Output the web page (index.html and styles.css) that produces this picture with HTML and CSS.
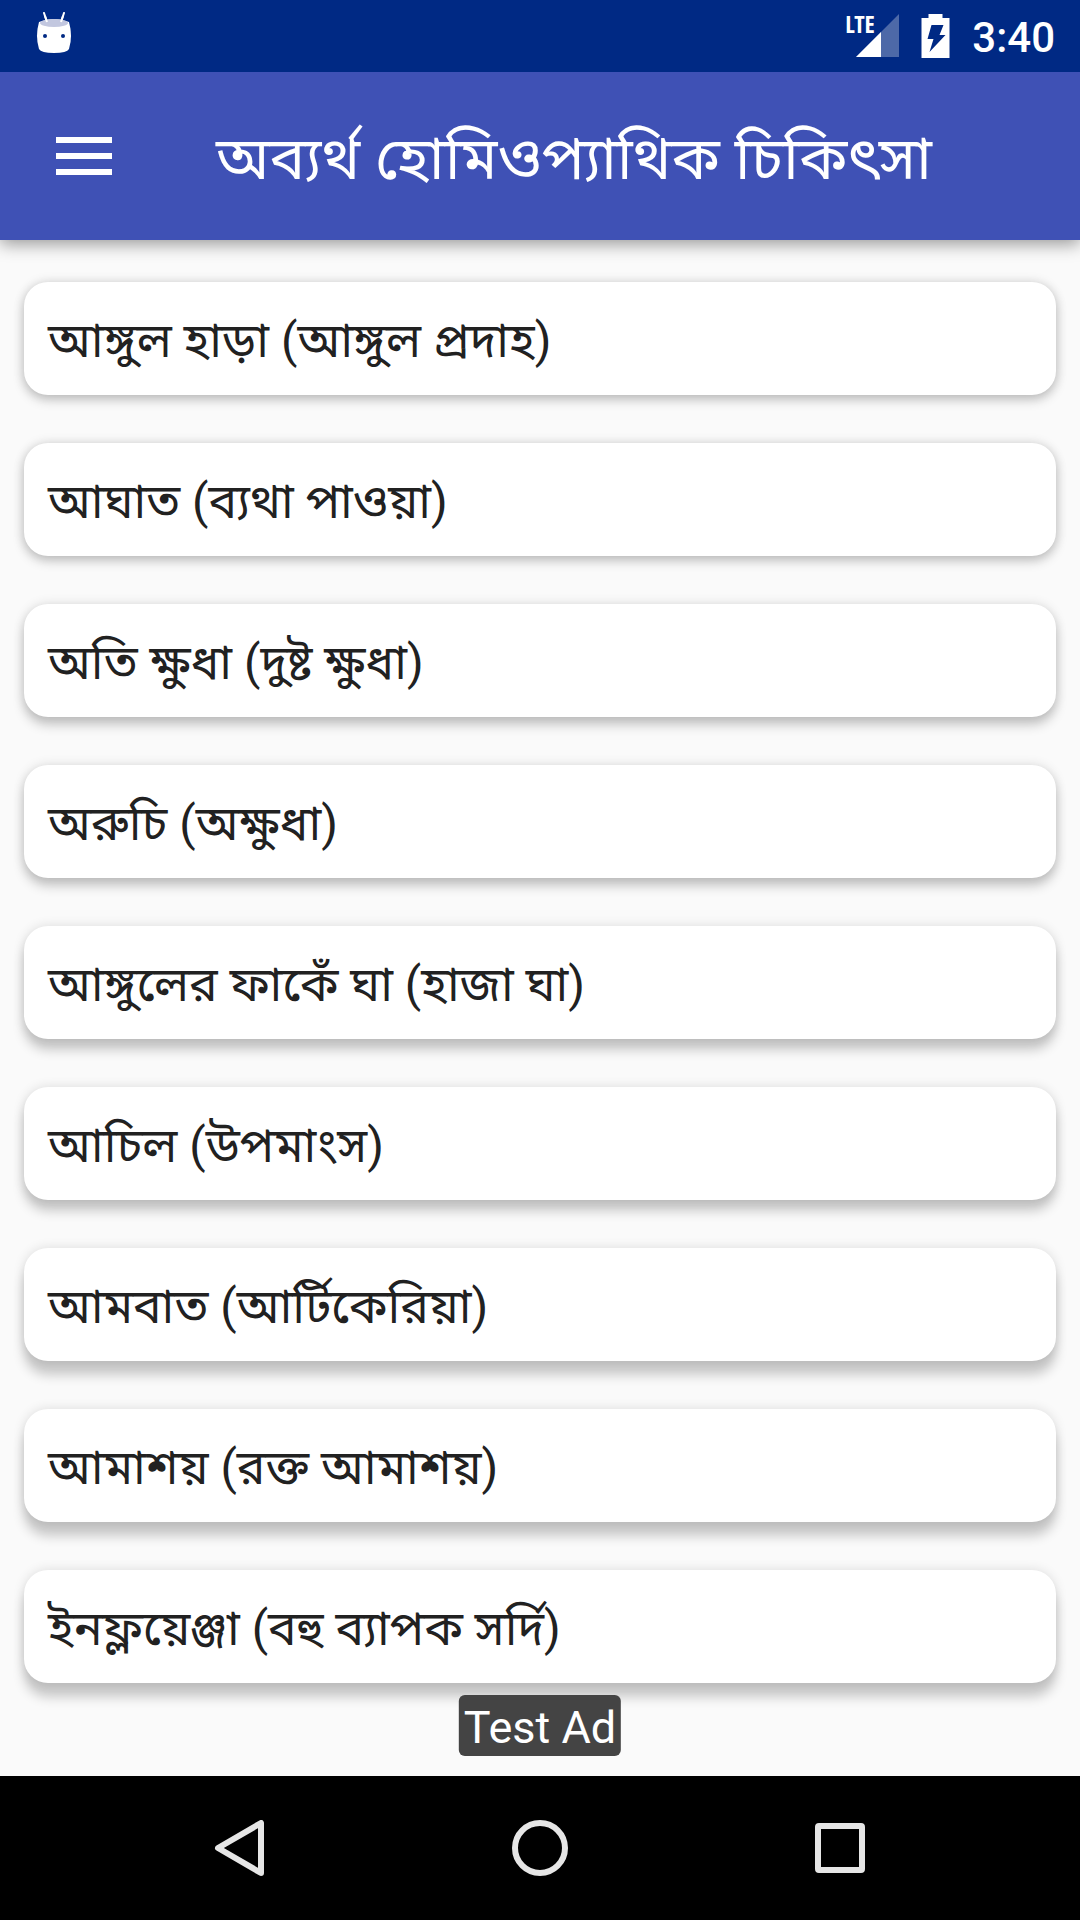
FILE: index.html
```html
<!DOCTYPE html>
<html lang="bn">
<head>
  <meta charset="utf-8">
  <meta name="viewport" content="width=device-width, initial-scale=1">
  <title>অব্যর্থ হোমিওপ্যাথিক চিকিৎসা</title>
  <link rel="stylesheet" href="styles.css">
</head>
<body>
  <div class="status-bar">
    <svg class="status-bot" viewBox="0 0 36 42" aria-hidden="true">
      <path d="M8 1l3 9M28 1l-3 9" stroke="#fff" stroke-width="2" stroke-linecap="round"/>
      <path d="M3 10Q18 4 33 10Q37 24 33 37Q31 41 18 41Q5 41 3 37Q-1 24 3 10z" fill="#fff"/>
      <ellipse cx="18" cy="11" rx="14" ry="4" fill="#c2c7df"/>
      <path d="M9 4l2 6M27 4l-2 6" stroke="#fff" stroke-width="2"/>
      <circle cx="9" cy="24" r="2" fill="#002984"/>
      <circle cx="27" cy="24" r="2" fill="#002984"/>
    </svg>
    <div class="status-right">
      <div class="signal">
        <svg class="signal-icon" viewBox="0 0 54 44" aria-hidden="true">
          <path d="M54 0v43H11z" fill="#4d69a8"/>
          <path d="M36 18v25H11z" fill="#fff"/>
        </svg>
        <span class="signal-label">LTE</span>
      </div>
      <svg class="battery" viewBox="0 0 28 44" aria-hidden="true">
        <path d="M7 0h14v4h7v40H0V4h7z" fill="#fff"/>
        <path d="M10 11h12l-4 10h6L8 38l4-13H6z" fill="#002984"/>
      </svg>
      <time class="clock">3:40</time>
    </div>
  </div>
  <header class="app-bar">
    <button class="menu-button" type="button" aria-label="মেনু">
      <svg class="menu-icon" viewBox="0 0 56 38" aria-hidden="true">
        <path d="M0 0h56v6H0zM0 16h56v6H0zM0 32h56v6H0z" fill="#fff"/>
      </svg>
    </button>
    <h1 class="title">অব্যর্থ হোমিওপ্যাথিক চিকিৎসা</h1>
  </header>
  <main class="content">
    <ul class="list">
      <li><a class="card" href="#1">আঙ্গুল হাড়া (আঙ্গুল প্রদাহ)</a></li>
      <li><a class="card" href="#2">আঘাত (ব্যথা পাওয়া)</a></li>
      <li><a class="card" href="#3">অতি ক্ষুধা (দুষ্ট ক্ষুধা)</a></li>
      <li><a class="card" href="#4">অরুচি (অক্ষুধা)</a></li>
      <li><a class="card" href="#5">আঙ্গুলের ফাকেঁ ঘা (হাজা ঘা)</a></li>
      <li><a class="card" href="#6">আচিল (উপমাংস)</a></li>
      <li><a class="card" href="#7">আমবাত (আর্টিকেরিয়া)</a></li>
      <li><a class="card" href="#8">আমাশয় (রক্ত আমাশয়)</a></li>
      <li><a class="card" href="#9">ইনফ্লয়েঞ্জা (বহু ব্যাপক সর্দি)</a></li>
    </ul>
    <div class="ad-label">Test Ad</div>
  </main>
  <nav class="nav-bar">
    <button class="nav-button" type="button" aria-label="Back">
      <svg class="nav-icon" viewBox="0 0 56 56" aria-hidden="true">
        <path d="M49 3v50L6 28z" fill="none" stroke="#e6e6e6" stroke-width="6" stroke-linejoin="round"/>
      </svg>
    </button>
    <button class="nav-button" type="button" aria-label="Home">
      <svg class="nav-icon" viewBox="0 0 56 56" aria-hidden="true">
        <circle cx="28" cy="28" r="25" fill="none" stroke="#e6e6e6" stroke-width="6"/>
      </svg>
    </button>
    <button class="nav-button" type="button" aria-label="Recents">
      <svg class="nav-icon" viewBox="0 0 56 56" aria-hidden="true">
        <rect x="6" y="6" width="44" height="44" rx="1" fill="none" stroke="#e6e6e6" stroke-width="6"/>
      </svg>
    </button>
  </nav>
</body>
</html>
```
FILE: styles.css
```css
* {
  box-sizing: border-box;
}

body {
  margin: 0;
  min-height: 100vh;
  display: flex;
  flex-direction: column;
  background: #fafafa;
  color: #212121;
  font-family: Roboto, "Noto Sans Bengali", "Noto Sans", sans-serif;
}

button {
  margin: 0;
  padding: 0;
  border: 0;
  background: none;
}

svg {
  display: block;
}

.status-bar {
  position: relative;
  z-index: 1;
  display: flex;
  align-items: center;
  justify-content: space-between;
  height: 72px;
  padding: 0 25px 0 36px;
  background: #002984;
  color: #fff;
}

.status-bot {
  width: 36px;
  height: 42px;
  margin-bottom: 6px;
}

.status-right {
  display: flex;
  align-items: center;
  gap: 22px;
}

.signal {
  position: relative;
}

.signal-icon {
  width: 54px;
  height: 44px;
}

.signal-label {
  position: absolute;
  top: 0;
  left: 0;
  font: 700 24px/20px "Liberation Sans Narrow", "Open Sans Condensed", "Roboto Condensed", Roboto, sans-serif;
}

.battery {
  width: 29px;
  height: 44px;
}

.clock {
  padding-top: 4px;
  font-size: 42px;
  font-weight: 500;
  line-height: 48px;
}

.app-bar {
  position: relative;
  display: flex;
  align-items: center;
  height: 168px;
  padding: 0 56px;
  gap: 104px;
  background: #3f51b5;
  color: #fff;
  box-shadow: 0 4px 16px rgba(0, 0, 0, 0.4);
}

.menu-icon {
  width: 56px;
  height: 38px;
}

.title {
  margin: 0;
  padding-top: 6px;
  font-size: 60px;
  font-weight: 400;
  line-height: 84px;
  white-space: nowrap;
}

.content {
  position: relative;
  flex: 1;
  padding: 42px 24px 93px;
}

.list {
  display: flex;
  flex-direction: column;
  gap: 48px;
  margin: 0;
  padding: 0;
  list-style: none;
}

.card {
  display: block;
  padding: 26px 24px 22px;
  border-radius: 24px;
  background: #fff;
  color: inherit;
  font-size: 48px;
  line-height: 65px;
  text-decoration: none;
  box-shadow: 0 0 12px rgba(0, 0, 0, 0.12), 0 var(--drop, 5px) 12px rgba(0, 0, 0, 0.2);
}

/* The light sits at the top of the screen, so lower cards cast longer shadows. */
li:nth-child(n + 3) {
  --drop: 8px;
}

li:nth-child(n + 5) {
  --drop: 11px;
}

li:nth-child(n + 7) {
  --drop: 14px;
}

.ad-label {
  position: absolute;
  bottom: 20px;
  left: 50%;
  transform: translateX(-50%);
  padding: 8px 5px 4px;
  border-radius: 6px;
  background: #444;
  color: #fff;
  font-size: 45px;
  line-height: 49px;
  white-space: nowrap;
}

.nav-bar {
  display: flex;
  align-items: center;
  justify-content: center;
  gap: 20px;
  height: 144px;
  background: #000;
}

.nav-button {
  display: flex;
  justify-content: center;
  width: 280px;
}

.nav-icon {
  width: 56px;
  height: 56px;
}
```
